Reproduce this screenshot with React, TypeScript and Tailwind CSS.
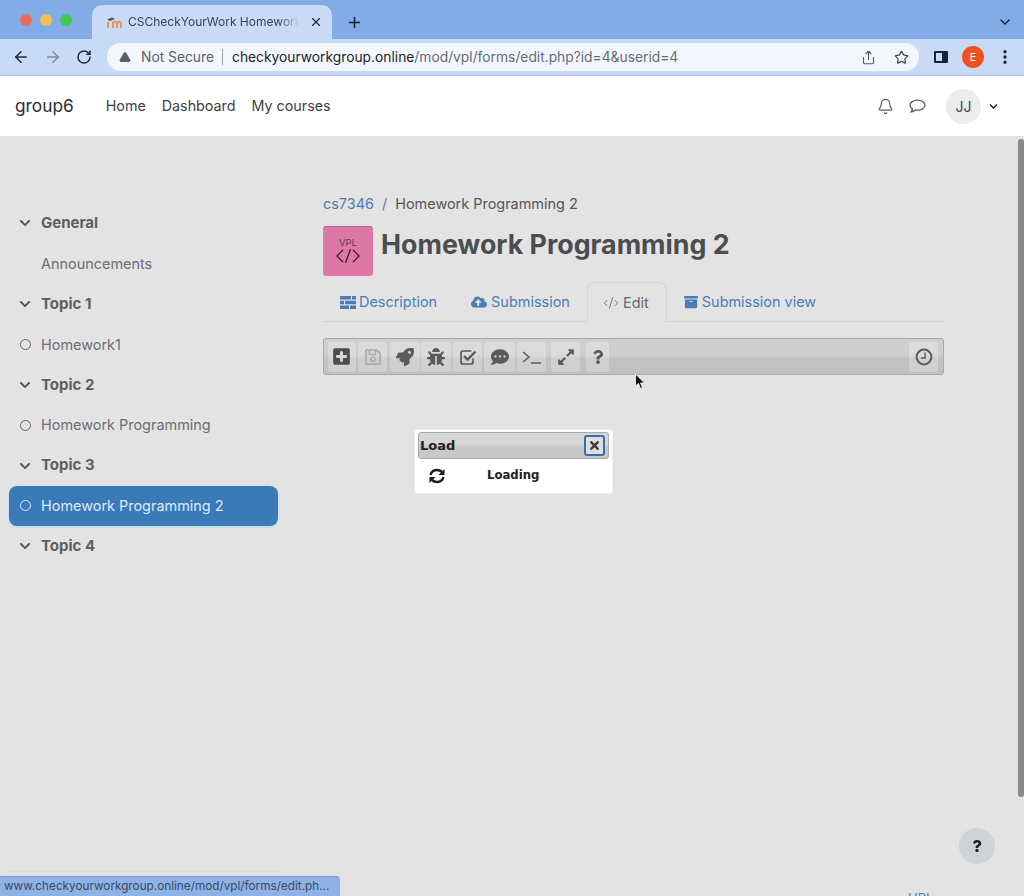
import React from 'react';
import {
  FaArchive, FaBug, FaChevronDown, FaCloudUploadAlt, FaCommentDots, FaExpandAlt, FaPlusSquare,
  FaQuestion, FaRegSave, FaRocket, FaTimes,
} from 'react-icons/fa';
import { ArrowLeft, ArrowRight, Bell, ChevronDown, CodeXml, MoreVertical, Plus, RotateCw, Share, Star, TriangleAlert, X } from 'lucide-react';

const sections = [
  { label: 'General', kind: 'section' },
  { label: 'Announcements', kind: 'plain' },
  { label: 'Topic 1', kind: 'section' },
  { label: 'Homework1', kind: 'item' },
  { label: 'Topic 2', kind: 'section' },
  { label: 'Homework Programming', kind: 'item' },
  { label: 'Topic 3', kind: 'section' },
  { label: 'Homework Programming 2', kind: 'active' },
  { label: 'Topic 4', kind: 'section' },
];

const SideRow: React.FC<{ label: string; kind: string }> = ({ label, kind }) => {
  if (kind === 'active') {
    return (
      <div className="flex items-center h-[40.4px] w-[269px] rounded-lg bg-[#3a7ab8] text-[#dcebfa] text-[14.45px] shadow-[0_1px_3px_#b9d3ef]">
        <span className="w-[32px] flex justify-center shrink-0">
          <span className="w-[11px] h-[11px] rounded-full border border-[#dcebfa]" />
        </span>
        <span>{label}</span>
      </div>
    );
  }
  return (
    <div className="flex items-center h-[40.4px] w-[269px]">
      <span className="w-[32px] flex justify-center shrink-0">
        {kind === 'section' && <FaChevronDown className="text-[#55575b] text-[12px]" />}
        {kind === 'item' && <span className="w-[11px] h-[11px] rounded-full border border-[#5f6165]" />}
      </span>
      <span className={kind === 'section' ? 'text-[15px] font-bold text-[#5d5f63]' : 'text-[14.45px] text-[#6c6e72]'}>{label}</span>
    </div>
  );
};

const Tab: React.FC<{ icon: React.ReactNode; label: string; active?: boolean }> = ({ icon, label, active }) => (
  <div
    className={`flex items-center gap-[4px] h-[40px] text-[14.45px] ${
      active
        ? 'w-[80px] pr-[2px] justify-center border border-b-0 border-[#d5d5d5] rounded-t-lg bg-[#e3e3e3] text-[#666769] z-10'
        : 'px-[17px] text-[#4a7db5]'
    }`}
  >
    {icon}
    <span>{label}</span>
  </div>
);

const ToolButton: React.FC<{ w: string; children: React.ReactNode; faded?: boolean }> = ({ w, children, faded }) => (
  <div className={`${w} h-[30px] flex items-center justify-center rounded-[3px] bg-white/25 text-[17px] ${faded ? 'text-[#a9a9a9]' : 'text-[#5a5a5a]'}`}>
    {children}
  </div>
);

export default function App() {
  return (
    <div className="relative w-[1024px] h-[896px] overflow-hidden bg-[#e3e3e3] font-['Inter','Liberation_Sans',sans-serif]">
      {/* browser tabs */}
      <div className="h-[39px] bg-[#83abe5] flex items-end">
        <div className="flex items-center gap-[8px] w-[92px] h-[39px] pl-[20px] shrink-0">
          <span className="w-[12px] h-[12px] rounded-full bg-[#ec6a5e]" />
          <span className="w-[12px] h-[12px] rounded-full bg-[#f4bf4f]" />
          <span className="w-[12px] h-[12px] rounded-full bg-[#3fc950]" />
        </div>
        <div className="w-[240px] h-[34px] rounded-t-[10px] bg-[#c8daf5] flex items-center pl-[14px] pr-[9px] text-[12px] text-[#3b4350]">
          <svg width="16" height="14" viewBox="0 0 16 14" className="shrink-0">
            <path d="M1 4.5 L6 2.5 L9 4 L4 6 Z" fill="#555" />
            <path d="M2 13V7 M7 13V8.5C7 6.5 11 6 11 8.5V13 M11 8.5C11 6 15 6 15 8.5V13" stroke="#e8935a" strokeWidth="2" fill="none" />
          </svg>
          <span className="ml-[6px] w-[172px] overflow-hidden whitespace-nowrap [mask-image:linear-gradient(90deg,#000_88%,transparent)]">CSCheckYourWork Homework</span>
          <X className="ml-auto text-[#1f2a3a]" size={14} strokeWidth={2} />
        </div>
        <Plus className="ml-[14px] mb-[8px] text-[#16233a]" size={17} strokeWidth={2.2} />
        <ChevronDown className="ml-auto mr-[11px] mb-[9px] text-[#16233a]" size={16} strokeWidth={2} />
      </div>

      {/* address bar */}
      <div className="h-[37px] bg-[#c8daf5] border-b border-[#a3bade] flex items-center">
        <ArrowLeft className="ml-[12px] text-[#1f2a3a] shrink-0" size={18} strokeWidth={2} />
        <ArrowRight className="ml-[14px] text-[#7d8ba3] shrink-0" size={18} strokeWidth={2} />
        <RotateCw className="ml-[14px] text-[#1f2a3a] shrink-0" size={16} strokeWidth={2.2} />
        <div className="ml-[15px] w-[812px] h-[28px] rounded-full bg-[#f3f7fd] flex items-center pl-[12px] text-[13.8px] shrink-0">
          <TriangleAlert className="text-[#5b5f66] fill-[#5b5f66] stroke-[#5b5f66] shrink-0" size={12} />
          <span className="ml-[10px] text-[#5d6168]">Not Secure</span>
          <span className="ml-[8px] w-px h-[16px] bg-[#9a9fa8]" />
          <span className="ml-[9px] text-[#1c1f24]">checkyourworkgroup.online</span>
          <span className="text-[#676b72]">/mod/vpl/forms/edit.php?id=4&amp;userid=4</span>
          <Share className="ml-auto mr-[1px] text-[#555a62]" size={15} strokeWidth={1.8} />
          <Star className="ml-[17px] mr-[10px] text-[#454a52]" size={15} strokeWidth={2} />
        </div>
        <span className="ml-[15px] w-[14px] h-[12px] border-2 border-[#16233a] border-r-[6px] rounded-[1px] shrink-0" />
        <span className="ml-[14px] w-[22px] h-[22px] rounded-full bg-[#f0501e] text-white text-[11px] flex items-center justify-center shrink-0">E</span>
        <MoreVertical className="ml-[12px] text-[#16233a] shrink-0" size={18} strokeWidth={2.4} />
      </div>

      {/* moodle navbar */}
      <div className="h-[60px] bg-white flex items-center text-[#3d4045]">
        <span className="ml-[15px] text-[17.3px] text-[#2c2e32]">group6</span>
        <span className="ml-[32px] text-[14.3px]">Home</span>
        <span className="ml-[16px] text-[14.3px]">Dashboard</span>
        <span className="ml-[16px] text-[14.3px]">My courses</span>
        <Bell className="ml-auto text-[#5c5e62]" size={17} strokeWidth={1.7} />
        <svg className="ml-[15px]" width="17" height="15" viewBox="0 0 17 15" fill="none" stroke="#5c5e62" strokeWidth="1.3">
          <path d="M8.5 1.2C4.4 1.2 1 3.4 1 6.2c0 1.5 1 2.8 2.5 3.7-.2 1.2-.8 2.2-1.4 3 1.6-.2 3-.9 4-1.9.8.2 1.6.2 2.4.2 4.1 0 7.5-2.2 7.5-5S12.6 1.2 8.5 1.2z" />
        </svg>
        <span className="ml-[20px] w-[35px] h-[35px] rounded-full bg-[#ececec] text-[14px] text-[#44464a] flex items-center justify-center">JJ</span>
        <FaChevronDown className="ml-[8px] mr-[26px] text-[#1c1c1c] text-[9px]" />
      </div>

      {/* page */}
      <div className="flex">
        <div className="w-[323px] shrink-0 pl-[9px] pt-[67px]">
          {sections.map((s) => (
            <SideRow key={s.label} label={s.label} kind={s.kind} />
          ))}
        </div>

        <div className="w-[621px] pt-[57px]">
          <div className="h-[22px] flex items-center text-[14.45px]">
            <span className="text-[#4a7db5]">cs7346</span>
            <span className="ml-[8px] text-[#77797c]">/</span>
            <span className="ml-[8px] text-[#55575a]">Homework Programming 2</span>
          </div>

          <div className="mt-[11px] flex items-start h-[50px]">
            <div className="w-[50px] h-[50px] rounded-[3px] border-t border-[#b5668a] bg-[#dd77a5] flex flex-col items-center pt-[11px]">
              <span className="text-[9.5px] leading-[10px] text-[#6b3a52]">VPL</span>
              <svg width="26" height="16" viewBox="0 0 26 16" fill="none" stroke="#4a1c36" strokeWidth="1.4">
                <path d="M8 2 L2 8 L8 14 M18 2 L24 8 L18 14 M15.5 1 L10.5 15" />
              </svg>
            </div>
            <span className="ml-[8px] text-[26.8px] leading-[37px] font-bold text-[#4b4d50]">Homework Programming 2</span>
          </div>

          <div className="mt-[6px] h-[40px] flex border-b border-[#d5d5d5]">
            <Tab
              icon={
                <svg width="16" height="13" viewBox="0 0 16 13" fill="#4a7db5" className="mr-[-1px]">
                  <path d="M0 0h11v3.4H0zM12 0h4v3.4h-4zM0 4.8h4v3.4H0zM5 4.8h11v3.4H5zM0 9.6h9V13H0zM10 9.6h6V13h-6z" />
                </svg>
              }
              label="Description"
            />
            <Tab icon={<FaCloudUploadAlt className="text-[16px]" />} label="Submission" />
            <Tab icon={<CodeXml size={16} strokeWidth={1.3} />} label="Edit" active />
            <Tab icon={<FaArchive className="text-[14px]" />} label="Submission view" />
          </div>

          <div className="mt-[16px] h-[37px] flex items-center pl-[4px] pr-[5px] rounded-[3px] border border-[#a9a9a9] bg-[linear-gradient(#cfcfcf_0%,#cfcfcf_45%,#c1c1c1_55%,#c1c1c1_100%)]">
            <ToolButton w="w-[28px] pr-[2px]"><FaPlusSquare className="text-[19px] text-[#4c4c4c]" /></ToolButton>
            <span className="w-[2px]" />
            <ToolButton w="w-[29px]" faded><FaRegSave className="text-[18px]" /></ToolButton>
            <span className="w-[3px]" />
            <ToolButton w="w-[30px]"><FaRocket className="text-[18px]" /></ToolButton>
            <span className="w-px" />
            <ToolButton w="w-[30px]"><FaBug className="text-[18px]" /></ToolButton>
            <span className="w-[2px]" />
            <ToolButton w="w-[29px]">
              <svg width="18" height="18" viewBox="0 0 18 18" fill="none" stroke="#5a5a5a">
                <path d="M14 10.5V14a2 2 0 0 1-2 2H4a2 2 0 0 1-2-2V5a2 2 0 0 1 2-2h8.5" strokeWidth="1.7" />
                <path d="M5 8l3.5 3.5L16.5 3.5" strokeWidth="2.3" />
              </svg>
            </ToolButton>
            <span className="w-[2px]" />
            <ToolButton w="w-[31px]"><FaCommentDots className="text-[18px]" /></ToolButton>
            <span className="w-[2px]" />
            <ToolButton w="w-[29px]">
              <svg width="20" height="16" viewBox="0 0 20 16" fill="none" stroke="#5a5a5a" strokeWidth="1.5">
                <path d="M1 3l6 5-6 5M9 14h10" />
              </svg>
            </ToolButton>
            <span className="w-[5px]" />
            <ToolButton w="w-[29px]"><FaExpandAlt className="text-[18px]" /></ToolButton>
            <span className="w-[6px]" />
            <ToolButton w="w-[23px]"><FaQuestion className="text-[14px]" /></ToolButton>
            <div className="ml-auto">
              <ToolButton w="w-[29px]">
                <svg width="18" height="18" viewBox="0 0 18 18" fill="none" stroke="#5a5a5a">
                  <circle cx="9" cy="9" r="7.4" strokeWidth="2" />
                  <path d="M10 4.5V10H6" strokeWidth="1.4" />
                </svg>
              </ToolButton>
            </div>
          </div>
        </div>
      </div>

      {/* load dialog */}
      <div className="absolute left-[414px] top-[429px] w-[199px] h-[65px] rounded-[3px] bg-white border border-[#efefef] px-[3px] pt-[2px] font-['DejaVu_Sans',sans-serif]">
        <div className="h-[27px] flex items-center rounded-[3px] border border-[#a9a9a9] bg-[linear-gradient(#d6d6d6_0%,#d6d6d6_45%,#c8c8c8_55%,#c8c8c8_100%)] pl-[1px] pr-[3px]">
          <span className="text-[13px] font-bold text-[#222]">Load</span>
          <span className="ml-auto w-[21px] h-[21px] rounded-[3px] border-2 border-[#3a6ea8] bg-[#dedede] flex items-center justify-center">
            <FaTimes className="text-[#3a3a3a] text-[13px]" />
          </span>
        </div>
        <div className="h-[30px] pt-[3px] flex items-center text-[11.7px] font-bold text-[#222]">
          <svg className="ml-[10px]" width="18" height="16" viewBox="0 0 18 16" fill="#1c1c1c">
            <path d="M2.5 7C3.5 3.5 6 2 9 2c2 0 3.7.8 5 2" fill="none" stroke="#1c1c1c" strokeWidth="2.4" />
            <path d="M16.5 1v6h-6z" />
            <path d="M15.5 9c-1 3.5-3.5 5-6.5 5-2 0-3.7-.8-5-2" fill="none" stroke="#1c1c1c" strokeWidth="2.4" />
            <path d="M1.5 15V9h6z" />
          </svg>
          <span className="ml-[41px]">Loading</span>
        </div>
      </div>

      {/* mouse cursor */}
      <svg className="absolute left-[634px] top-[373px]" width="12" height="17" viewBox="0 0 12 17">
        <path d="M1.5 1 L1.5 13 L4.5 10.5 L6.5 15.5 L8.5 14.5 L6.5 10 L10.5 10 Z" fill="#111" stroke="#fff" strokeWidth="0.8" />
      </svg>

      {/* scrollbar */}
      <div className="absolute left-[1018px] top-[139px] w-[6px] h-[658px] rounded-full bg-[#8a8a8a]" />

      {/* help */}
      <div className="absolute left-[959px] top-[828px] w-[36px] h-[36px] rounded-full bg-[#cfd3d8] flex items-center justify-center">
        <FaQuestion className="text-[12px] text-[#1c1f24]" />
      </div>

      <span className="absolute left-[908px] top-[889px] text-[13px] text-[#4a7db5]">URL</span>

      {/* status bubble */}
      <div className="absolute left-[7px] top-[871px] w-[276px] h-px bg-[#dcdcdc]" />
      <div className="absolute left-0 top-[876px] w-[340px] h-[20px] rounded-tr-[4px] bg-[#8fb2e6] border-t border-[#7f9dc9] pl-[4px] text-[11.75px] leading-[19px] text-[#3c4a62] whitespace-nowrap">
        www.checkyourworkgroup.online/mod/vpl/forms/edit.ph...
      </div>
    </div>
  );
}
